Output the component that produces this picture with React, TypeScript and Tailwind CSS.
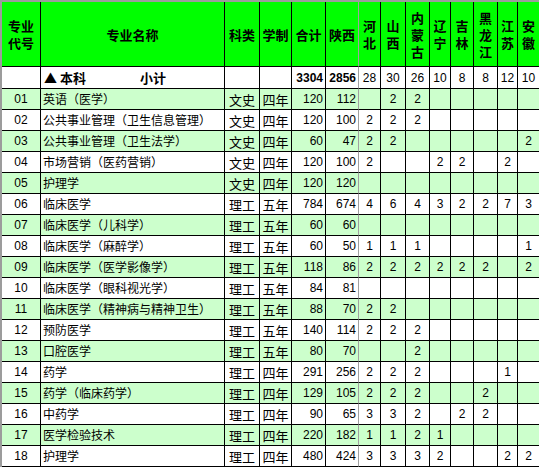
import React from "react";

const GRID =
  "grid grid-cols-[39px_184px_35px_32px_34px_33px_22px_25px_24px_21px_23px_24px_20px_22px]";

const CJK = "font-['SimSun','Noto_Sans_CJK_SC',sans-serif]";
const NUM = "font-['Liberation_Sans','Arial',sans-serif]";

type Row = {
  code: string;
  name: string;
  kind: string;
  years: string;
  total: string;
  sx: string;
  prov: string[];
};

const mk = (
  code: string,
  name: string,
  kind: string,
  years: string,
  total: string,
  sx: string,
  prov: string
): Row => ({ code, name, kind, years, total, sx, prov: prov.split(",") });

const rows: Row[] = [
  mk("01", "英语（医学）", "文史", "四年", "120", "112", ",2,2,,,,,"),
  mk("02", "公共事业管理（卫生信息管理）", "文史", "四年", "120", "100", "2,2,2,,,,,"),
  mk("03", "公共事业管理（卫生法学）", "文史", "四年", "60", "47", "2,2,,,,,,2"),
  mk("04", "市场营销（医药营销）", "文史", "四年", "120", "100", "2,,,2,2,,2,"),
  mk("05", "护理学", "文史", "四年", "120", "120", ",,,,,,,"),
  mk("06", "临床医学", "理工", "五年", "784", "674", "4,6,4,3,2,2,7,3"),
  mk("07", "临床医学（儿科学）", "理工", "五年", "60", "60", ",,,,,,,"),
  mk("08", "临床医学（麻醉学）", "理工", "五年", "60", "50", "1,1,1,,,,,1"),
  mk("09", "临床医学（医学影像学）", "理工", "五年", "118", "86", "2,2,2,2,2,2,,2"),
  mk("10", "临床医学（眼科视光学）", "理工", "五年", "84", "81", ",,,,,,,"),
  mk("11", "临床医学（精神病与精神卫生）", "理工", "五年", "88", "70", "2,2,,,,,,"),
  mk("12", "预防医学", "理工", "五年", "140", "114", "2,2,2,,,,,"),
  mk("13", "口腔医学", "理工", "五年", "80", "70", ",,2,,,,,"),
  mk("14", "药学", "理工", "四年", "291", "256", "2,2,2,,,,1,"),
  mk("15", "药学（临床药学）", "理工", "四年", "129", "105", "2,2,2,,,2,,"),
  mk("16", "中药学", "理工", "四年", "90", "65", "3,3,2,,2,2,,"),
  mk("17", "医学检验技术", "理工", "四年", "220", "182", "1,1,2,1,,,,"),
  mk("18", "护理学", "理工", "四年", "480", "424", "3,3,3,2,,,2,2"),
];

const provs = [
  ["河", "北"],
  ["山", "西"],
  ["内", "蒙", "古"],
  ["辽", "宁"],
  ["吉", "林"],
  ["黑", "龙", "江"],
  ["江", "苏"],
  ["安", "徽"],
];

const subtotal = ["28", "30", "26", "10", "8", "8", "12", "10"];

function Cell({
  children,
  className = "",
  gray = false,
}: {
  children?: React.ReactNode;
  className?: string;
  gray?: boolean;
}) {
  return (
    <div
      className={
        "border-b border-r overflow-hidden whitespace-nowrap flex items-center " +
        (gray ? "border-r-[#a0a0a0] border-b-black " : "border-black ") +
        className
      }
    >
      {children}
    </div>
  );
}

export default function App() {
  return (
    <div className="w-[539px] h-[468px] overflow-hidden bg-white">
      <div className="w-[540px] border-t-2 border-l-2 border-[#9c9c9c] text-black">
        {/* header */}
        <div className={GRID + " h-[65px] bg-[#00ff00] text-[13px] font-bold leading-[17px] " + CJK}>
          <Cell className="justify-center text-center">
            <div>
              <div>专业</div>
              <div>代号</div>
            </div>
          </Cell>
          <Cell className="justify-center">专业名称</Cell>
          <Cell className="justify-center">科类</Cell>
          <Cell className="justify-center">学制</Cell>
          <Cell className="justify-center">合计</Cell>
          <Cell className="justify-center" gray>
            陕西
          </Cell>
          {provs.map((p, i) => (
            <Cell key={i} className="justify-center text-center">
              <div>
                {p.map((c, j) => (
                  <div key={j}>{c}</div>
                ))}
              </div>
            </Cell>
          ))}
        </div>

        {/* subtotal */}
        <div className={GRID + " h-[22px] bg-white text-[12px]"}>
          <Cell />
          <Cell className={"pl-[3px] font-bold text-[13px] " + CJK}>
            <span className="w-[96px]">▲ 本科</span>
            <span>小计</span>
          </Cell>
          <Cell />
          <Cell />
          <Cell className={"justify-end pr-[2px] font-bold " + NUM}>3304</Cell>
          <Cell className={"justify-end pr-[2px] font-bold " + NUM} gray>
            2856
          </Cell>
          {subtotal.map((v, i) => (
            <Cell key={i} className={"justify-center " + NUM}>
              {v}
            </Cell>
          ))}
        </div>

        {rows.map((r, idx) => (
          <div
            key={r.code}
            className={
              GRID +
              " h-[21px] text-[12px] " +
              (idx % 2 === 0 ? "bg-[#ccffcc]" : "bg-white")
            }
          >
            <Cell className={"justify-center " + NUM}>{r.code}</Cell>
            <Cell className={"pl-[2px] " + CJK}>{r.name}</Cell>
            <Cell className={"justify-center text-[13px] pt-[2px] " + CJK}>{r.kind}</Cell>
            <Cell className={"justify-center text-[13px] pt-[2px] " + CJK}>{r.years}</Cell>
            <Cell className={"justify-end pr-[2px] " + NUM}>{r.total}</Cell>
            <Cell className={"justify-end pr-[2px] " + NUM} gray>
              {r.sx}
            </Cell>
            {r.prov.map((v, i) => (
              <Cell key={i} className={"justify-center " + NUM}>
                {v}
              </Cell>
            ))}
          </div>
        ))}
      </div>
    </div>
  );
}
